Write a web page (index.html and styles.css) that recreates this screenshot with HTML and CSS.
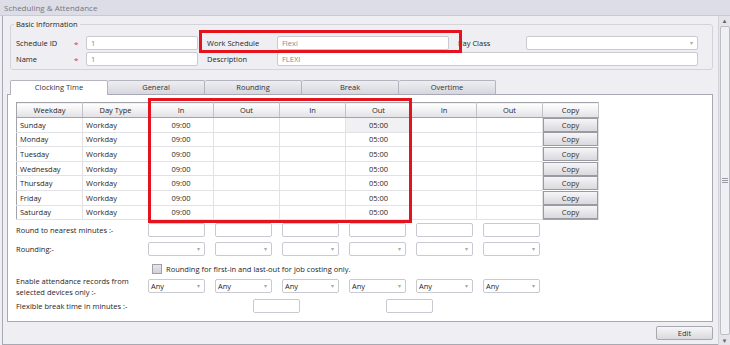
FILE: index.html
```html
<!DOCTYPE html>
<html lang="en">
<head>
	<meta charset="utf-8">
	<title>Scheduling &amp; Attendance</title>
	<link rel="stylesheet" href="styles.css">
</head>
<body>
	<div class="titlebar">Scheduling &amp; Attendance</div>
	<div class="workspace">
		<div class="frame">
			<fieldset class="group">
				<legend>Basic Information</legend>
				<div class="info-grid">
					<label>Schedule ID</label>
					<span class="req">*</span>
					<div class="field">1</div>
					<label class="lbl-mid">Work Schedule</label>
					<div class="field">Flexi</div>
					<label class="lbl-mid">Pay Class</label>
					<div class="field select"><span class="arrow">&#9662;</span></div>

					<label>Name</label>
					<span class="req">*</span>
					<div class="field">1</div>
					<label class="lbl-mid">Description</label>
					<div class="field wide">FLEXI</div>
				</div>
			</fieldset>

			<div class="tabs">
				<div class="tab active">Clocking Time</div>
				<div class="tab">General</div>
				<div class="tab">Rounding</div>
				<div class="tab">Break</div>
				<div class="tab">Overtime</div>
			</div>

			<div class="panel">
				<table class="grid">
					<colgroup>
						<col style="width:66px"><col style="width:66px"><col style="width:65px"><col style="width:66px"><col style="width:66px"><col style="width:66px"><col style="width:65px"><col style="width:66px"><col style="width:56px">
					</colgroup>
					<thead>
						<tr><th>Weekday</th><th>Day Type</th><th>In</th><th>Out</th><th>In</th><th>Out</th><th>In</th><th>Out</th><th>Copy</th></tr>
					</thead>
					<tbody id="rows"></tbody>
				</table>

				<div class="options">
					<div class="opt-label">Round to nearest minutes :-</div>
					<div class="opt-controls">
						<div class="box"></div><div class="box"></div><div class="box"></div><div class="box"></div><div class="box"></div><div class="box"></div>
					</div>

					<div class="opt-label">Rounding:-</div>
					<div class="opt-controls">
						<div class="box select"><span class="arrow">&#9662;</span></div><div class="box select"><span class="arrow">&#9662;</span></div><div class="box select"><span class="arrow">&#9662;</span></div><div class="box select"><span class="arrow">&#9662;</span></div><div class="box select"><span class="arrow">&#9662;</span></div><div class="box select"><span class="arrow">&#9662;</span></div>
					</div>

					<div class="opt-label"></div>
					<div class="opt-check"><span class="checkbox"></span>Rounding for first-in and last-out for job costing only.</div>

					<div class="opt-label two-line">Enable attendance records from selected devices only :-</div>
					<div class="opt-controls">
						<div class="box select">Any<span class="arrow">&#9662;</span></div><div class="box select">Any<span class="arrow">&#9662;</span></div><div class="box select">Any<span class="arrow">&#9662;</span></div><div class="box select">Any<span class="arrow">&#9662;</span></div><div class="box select">Any<span class="arrow">&#9662;</span></div><div class="box select">Any<span class="arrow">&#9662;</span></div>
					</div>

					<div class="opt-label">Flexible break time in minutes :-</div>
					<div class="opt-break">
						<div class="box small"></div><div class="box small"></div>
					</div>
				</div>
			</div>

			<div class="footer">
				<button class="btn">Edit</button>
			</div>

			<div class="mark mark-schedule"></div>
			<div class="mark mark-times"></div>
		</div>
		<div class="scrollbar">
			<span class="sb-arrow">&#9652;</span>
			<div class="sb-thumb"><span class="grip"></span></div>
			<span class="sb-arrow">&#9662;</span>
		</div>
	</div>

	<script>
		const days = ["Sunday", "Monday", "Tuesday", "Wednesday", "Thursday", "Friday", "Saturday"];
		const rows = document.getElementById("rows");
		days.forEach((day, i) => {
			const sel = i == 0 ? ' class="sel"' : '';
			rows.insertAdjacentHTML("beforeend",
				`<tr><td class="left">${day}</td><td class="left">Workday</td><td>09:00</td><td></td><td></td><td${sel}>05:00</td><td></td><td></td><td class="copy"><button>Copy</button></td></tr>`);
		});
	</script>
</body>
</html>
```

FILE: styles.css
```css
body {
	margin: 0;
	width: 730px;
	height: 345px;
	overflow: hidden;
	background: #eeeef3;
	color: #1e1e1e;
	font-family: "Open Sans", "DejaVu Sans", sans-serif;
	font-size: 7.5px;
}

.titlebar {
	height: 15px;
	line-height: 15px;
	padding-left: 4px;
	background: #dcdde7;
	border-bottom: 1px solid #c9cad4;
	color: #777784;
	font-size: 8px;
}

.workspace {
	display: flex;
	height: 329px;
}

.frame {
	position: relative;
	flex: 1;
	margin-left: 2px;
	border-left: 1px solid #a9a9b6;
	border-bottom: 1px solid #a9a9b6;
	padding: 0 5px 0 4px;
	display: flex;
	flex-direction: column;
}

/* basic information */
.group {
	margin: 3px 0 0 3px;
	padding: 7px 14px 3px 5px;
	border: 1px solid #d3d3dc;
	border-radius: 3px;
}

.group legend {
	padding: 0 2px;
	margin-left: -2px;
	line-height: 10px;
}

.info-grid {
	display: grid;
	grid-template-columns: 58px 12px 112px 79px 172px 77px 172px;
	grid-auto-rows: 14px;
	row-gap: 2px;
	align-items: center;
}

.info-grid label {
	line-height: 14px;
}

.info-grid .lbl-mid {
	padding-left: 9px;
}

.req {
	color: #e0303a;
	font-size: 8px;
}

.field {
	height: 12px;
	line-height: 12px;
	padding-left: 4px;
	background: #fff;
	border: 1px solid #cacad2;
	border-radius: 2px;
	color: #8a8a8a;
	position: relative;
}

.field.wide {
	grid-column: 5 / 8;
}

.arrow {
	position: absolute;
	right: 4px;
	top: 0;
	color: #a8a8a8;
	font-size: 6px;
}

/* tabs */
.tabs {
	display: flex;
	margin: 10px 0 0 3px;
}

.tab {
	width: 96px;
	height: 13px;
	line-height: 13px;
	text-align: center;
	border: 1px solid #b4b4c0;
	border-left: none;
	border-bottom: none;
	background: linear-gradient(#eeeef2, #d6d7de);
	border-radius: 2px 2px 0 0;
	color: #333;
}

.tab.active {
	border-left: 1px solid #b4b4c0;
	background: #fff;
	position: relative;
	top: 1px;
	margin-top: -1px;
	height: 14px;
}

.panel {
	height: 219px;
	background: #fff;
	border: 1px solid #a9a9b6;
	padding: 7px 0 0 8px;
}

/* clocking grid */
.grid {
	border-collapse: collapse;
	table-layout: fixed;
	width: 582px;
	border: 1px solid #a3a3ab;
}

.grid th {
	height: 14px;
	font-weight: normal;
	background: linear-gradient(#ffffff, #e2e2e6);
	border-right: 1px solid #c2c2c8;
	border-bottom: 1px solid #a3a3ab;
	padding: 0;
}

.grid td {
	height: 13.6px;
	padding: 0;
	text-align: center;
	border-right: 1px solid #e2e2e6;
	border-bottom: 1px solid #e2e2e6;
}

.grid td.left {
	text-align: left;
	padding-left: 3px;
}

.grid td.sel {
	background: #f1f1f3;
}

.grid td.copy {
	padding: 0;
	border-bottom: none;
}

.grid td.copy button {
	display: block;
	width: 100%;
	height: 14px;
	padding: 0;
	font: inherit;
	color: #333;
	background: linear-gradient(#f6f6f8, #d9d9de);
	border: 1px solid #9a9aa2;
}

/* options below grid */
.options {
	display: grid;
	grid-template-columns: 132px 1fr;
	grid-template-rows: 19px 21px 16px 20px 14px;
	margin-top: 3px;
	align-items: start;
}

.opt-label {
	line-height: 14px;
}

.opt-label.two-line {
	line-height: 11px;
	margin-top: -3px;
}

.opt-controls {
	display: flex;
	gap: 10px;
}

.box {
	width: 55px;
	height: 12px;
	line-height: 12px;
	background: #fff;
	border: 1px solid #c9c9d1;
	border-radius: 2px;
	position: relative;
}

.box.select {
	padding-left: 2px;
	width: 53px;
}

.box.small {
	width: 45px;
}

.opt-check {
	display: flex;
	align-items: center;
	gap: 4px;
	padding-left: 4px;
	margin-top: 1px;
	height: 10px;
}

.checkbox {
	width: 8px;
	height: 8px;
	border: 1px solid #a0a0a8;
	background: linear-gradient(#e6e6ea, #d0d0d6);
}

.opt-break {
	display: flex;
	gap: 86px;
	padding-left: 105px;
}

/* footer */
.footer {
	display: flex;
	justify-content: flex-end;
	padding-top: 4px;
}

.btn {
	width: 57px;
	height: 14px;
	padding: 0;
	font: inherit;
	color: #333;
	background: linear-gradient(#f6f6f8, #dadade);
	border: 1px solid #a8a8b0;
	border-radius: 2px;
}

/* annotation marks */
.mark {
	position: absolute;
	border: 3px solid #e5131d;
}

.mark-schedule {
	left: 196px;
	top: 14px;
	width: 257px;
	height: 17px;
}

.mark-times {
	left: 145px;
	top: 82px;
	width: 258px;
	height: 119px;
}

/* scrollbar */
.scrollbar {
	width: 13px;
	display: flex;
	flex-direction: column;
	align-items: center;
	background: #e4e4ea;
	border-left: 1px solid #d2d2da;
}

.sb-arrow {
	font-size: 7px;
	color: #666;
	height: 9px;
	line-height: 9px;
}

.sb-thumb {
	flex: 1;
	width: 8px;
	margin: 1px 0;
	background: #f0f0f4;
	border: 1px solid #bdbdc6;
	border-radius: 2px;
	display: flex;
	align-items: center;
	justify-content: center;
}

.grip {
	width: 6px;
	height: 5px;
	background: repeating-linear-gradient(#9a9aa4 0 1px, transparent 1px 2px);
}
```
